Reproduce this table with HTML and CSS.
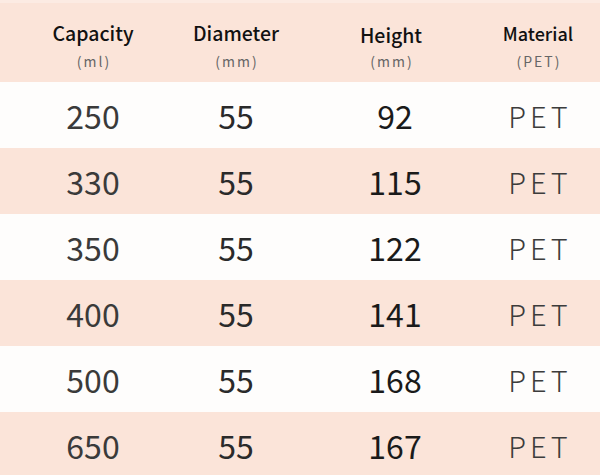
FILE: index.html
```html
<!DOCTYPE html>
<html>
<head>
<meta charset="utf-8">
<link rel="stylesheet" href="styles.css">
</head>
<body>
<div class="table">
  <div class="row head">
    <div class="cell"><span class="title">Capacity</span><span class="unit">(ml)</span></div>
    <div class="cell"><span class="title">Diameter</span><span class="unit">(mm)</span></div>
    <div class="cell"><span class="title hgt-t">Height</span><span class="unit">(mm)</span></div>
    <div class="cell"><span class="title mat">Material</span><span class="unit">(PET)</span></div>
  </div>
  <div class="row light">
    <div class="cell num">250</div><div class="cell num dia">55</div><div class="cell num hgt">92</div><div class="cell pet">PET</div>
  </div>
  <div class="row pink">
    <div class="cell num">330</div><div class="cell num dia">55</div><div class="cell num hgt">115</div><div class="cell pet">PET</div>
  </div>
  <div class="row light">
    <div class="cell num">350</div><div class="cell num dia">55</div><div class="cell num hgt">122</div><div class="cell pet">PET</div>
  </div>
  <div class="row pink">
    <div class="cell num">400</div><div class="cell num dia">55</div><div class="cell num hgt">141</div><div class="cell pet">PET</div>
  </div>
  <div class="row light">
    <div class="cell num">500</div><div class="cell num dia">55</div><div class="cell num hgt">168</div><div class="cell pet">PET</div>
  </div>
  <div class="row pink">
    <div class="cell num">650</div><div class="cell num dia">55</div><div class="cell num hgt">167</div><div class="cell pet">PET</div>
  </div>
</div>
</body>
</html>
```
FILE: styles.css
```css
html, body {
  margin: 0;
  padding: 0;
  background: #fbe4d9;
}
body {
  width: 600px;
  height: 475px;
  overflow: hidden;
  font-family: "Noto Sans CJK SC", "Noto Sans", sans-serif;
}
.table {
  display: flex;
  flex-direction: column;
}
.row {
  display: grid;
  grid-template-columns: 186px 100px 210px 84px;
  padding-right: 20px;
  height: 66px;
  align-items: center;
}
.head {
  height: 82px;
  box-sizing: border-box;
  padding-top: 6px;
  background: #fbe4d9;
  border-top: 3px solid #fcebe3;
}
.light { background: #fefdfc; }
.pink { background: #fbe4d9; }
.cell {
  display: flex;
  flex-direction: column;
  align-items: center;
  justify-content: center;
  white-space: nowrap;
}
.title {
  font-size: 19.5px;
  line-height: 22px;
  font-weight: 500;
  color: #111;
}
.title.hgt-t { position: relative; top: 2px; }
.title.mat { font-size: 18px; }
.unit {
  margin-top: 9px;
  font-size: 14px;
  line-height: 16px;
  color: #666;
  letter-spacing: 2px;
  padding-left: 2px;
}
.num {
  font-size: 32px;
  line-height: 40px;
  color: #3a3a3a;
}
.dia { color: #2a2a2a; }
.hgt { color: #1a1a1a; padding-left: 8px; }
.pet {
  font-size: 29px;
  line-height: 40px;
  font-weight: 300;
  color: #3c3c3c;
  letter-spacing: 4px;
  padding-left: 4px;
}
```
